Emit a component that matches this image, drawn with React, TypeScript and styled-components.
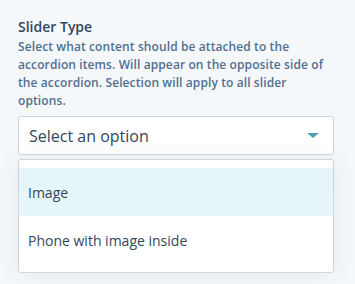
import React, { useState } from 'react';
import styled, { createGlobalStyle } from 'styled-components';

const GlobalStyle = createGlobalStyle`
  html, body {
    margin: 0;
    padding: 0;
    background: #f5f8fa;
  }
  body {
    font-family: 'Open Sans', 'Liberation Sans', sans-serif;
    color: #33475b;
  }
`;

const Page = styled.div`
  width: 355px;
  height: 284px;
  padding: 18px 21px 0 18px;
  box-sizing: border-box;
  overflow: hidden;
`;

const Label = styled.div`
  font-size: 14px;
  font-weight: 600;
  line-height: 18px;
  color: #33475b;
`;

const Help = styled.p`
  margin: 2px 0 0;
  font-size: 12px;
  font-weight: 600;
  line-height: 18px;
  color: #516f90;
  letter-spacing: 0.1px;
`;

const SelectBox = styled.button`
  margin-top: 6px;
  width: 100%;
  height: 39px;
  display: flex;
  align-items: center;
  justify-content: space-between;
  padding: 0 14px 0 10px;
  box-sizing: border-box;
  background: #ffffff;
  border: 1px solid #cbd6e2;
  border-radius: 3px;
  font-family: inherit;
  font-size: 16px;
  color: #33475b;
  cursor: pointer;
`;

const Caret = styled.span`
  width: 0;
  height: 0;
  border-left: 6px solid transparent;
  border-right: 6px solid transparent;
  border-top: 5px solid #4f9cb8;
`;

const Menu = styled.ul`
  list-style: none;
  margin: 4px 0 0;
  padding: 8px 0;
  background: #ffffff;
  border: 1px solid #cbd6e2;
  border-radius: 3px;
  box-shadow: 0 1px 24px rgba(45, 62, 80, 0.08);
`;

const Option = styled.li<{ $active?: boolean }>`
  height: 48px;
  display: flex;
  align-items: center;
  padding: 0 9px;
  font-size: 14px;
  color: #33475b;
  background: ${({ $active }) => ($active ? '#e5f5f8' : '#ffffff')};
  cursor: pointer;
`;

const options = ['Image', 'Phone with image inside'];

export default function App() {
  const [hovered, setHovered] = useState(0);

  return (
    <>
      <GlobalStyle />
      <Page>
        <Label>Slider Type</Label>
        <Help>
          Select what content should be attached to the accordion items. Will
          appear on the opposite side of the accordion. Selection will apply to
          all slider options.
        </Help>
        <SelectBox type="button">
          <span>Select an option</span>
          <Caret />
        </SelectBox>
        <Menu>
          {options.map((opt, i) => (
            <Option key={opt} $active={hovered === i} onMouseEnter={() => setHovered(i)}>
              {opt}
            </Option>
          ))}
        </Menu>
      </Page>
    </>
  );
}
